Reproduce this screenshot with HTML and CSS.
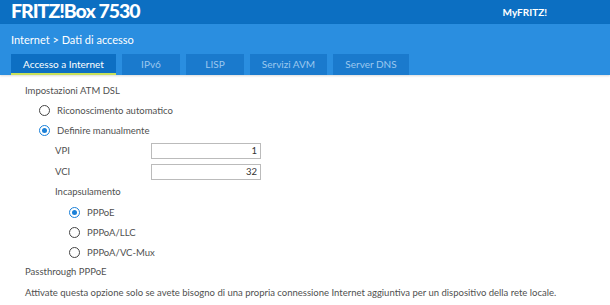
FILE: index.html
```html
<!DOCTYPE html>
<html>
<head>
<meta charset="utf-8">
<link rel="stylesheet" href="styles.css">
</head>
<body>
<header class="top">
  <div class="brand">FRITZ!Box 7530</div>
  <div class="myfritz">MyFRITZ!</div>
</header>
<div class="sub">
  <div class="crumb">Internet &gt; Dati di accesso</div>
  <nav class="tabs">
    <div class="tab active">Accesso a Internet</div>
    <div class="tab t-ipv6">IPv6</div>
    <div class="tab t-lisp">LISP</div>
    <div class="tab t-avm">Servizi AVM</div>
    <div class="tab t-dns">Server DNS</div>
  </nav>
</div>
<main class="content">
  <div class="heading">Impostazioni ATM DSL</div>
  <div class="group">
    <label class="radio"><span class="dot"></span>Riconoscimento automatico</label>
    <label class="radio"><span class="dot on"></span>Definire manualmente</label>
    <div class="sub-group">
      <div class="field"><span class="flabel">VPI</span><span class="input">1</span></div>
      <div class="field"><span class="flabel">VCI</span><span class="input">32</span></div>
      <div class="heading2">Incapsulamento</div>
      <div class="group2">
        <label class="radio"><span class="dot on"></span>PPPoE</label>
        <label class="radio"><span class="dot"></span>PPPoA/LLC</label>
        <label class="radio"><span class="dot"></span>PPPoA/VC-Mux</label>
      </div>
    </div>
  </div>
  <div class="heading pass">Passthrough PPPoE</div>
  <div class="desc">Attivate questa opzione solo se avete bisogno di una propria connessione Internet aggiuntiva per un dispositivo della rete locale.</div>
</main>
</body>
</html>
```

FILE: styles.css
```css
* { box-sizing: border-box; }
html, body { margin: 0; padding: 0; }
body {
  width: 610px;
  height: 305px;
  overflow: hidden;
  background: #fff;
  font-family: "Lato", "Open Sans", sans-serif;
  color: #505050;
}
.top {
  height: 24px;
  background: #0c6fc2;
  display: flex;
  align-items: flex-start;
  justify-content: space-between;
  padding: 0 63px 0 11px;
}
.brand {
  color: #fff;
  font-family: "Lato", sans-serif;
  font-weight: 900;
  font-size: 19.5px;
  line-height: 22px;
  letter-spacing: -1px;
}
.myfritz {
  color: #fff;
  font-size: 10px;
  font-weight: 700;
  line-height: 24px;
}
.sub {
  background: #2a8ee0;
  height: 51px;
  padding: 0 0 0 11px;
  box-shadow: 0 1px 2px rgba(0,0,0,0.15);
}
.crumb {
  color: #fff;
  font-size: 11px;
  height: 30px;
  line-height: 32px;
}
.tabs {
  display: flex;
  gap: 6px;
  height: 21px;
}
.tab {
  background: #1a7acd;
  color: #9cc8ef;
  font-size: 10px;
  height: 21px;
  line-height: 20px;
  text-align: center;
}
.tab.active {
  width: 105px;
  color: #fff;
  background: #0d6fc3;
  border-bottom: 2px solid #c8e05a;
}
.t-ipv6 { width: 58px; }
.t-lisp { width: 58px; }
.t-avm { width: 77px; }
.t-dns { width: 76px; }
.content {
  padding: 9px 0 0 25px;
  font-size: 9.5px;
}
.heading { height: 17px; line-height: 14px; }
.group { padding-left: 14px; margin-top: -1px; }
.radio {
  display: flex;
  align-items: center;
  height: 20px;
  gap: 7px;
}
.dot {
  width: 11px;
  height: 11px;
  border-radius: 50%;
  border: 1.5px solid #444;
  flex: none;
  display: inline-flex;
  align-items: center;
  justify-content: center;
}
.dot.on {
  border-color: #1a80d8;
  background: #fff;
}
.dot.on::after {
  content: "";
  width: 5px;
  height: 5px;
  border-radius: 50%;
  background: #1a80d8;
}
.sub-group { padding-left: 16px; }
.field {
  display: flex;
  align-items: center;
  height: 21px;
}
.flabel { width: 96px; }
.input {
  width: 110px;
  height: 16px;
  border: 1px solid #bbb;
  text-align: right;
  padding-right: 3px;
  line-height: 14px;
  color: #333;
}
.heading2 { height: 20px; line-height: 20px; }
.group2 { padding-left: 14px; }
.pass { line-height: 20px; height: 21px; }
.desc { line-height: 20px; white-space: nowrap; }
```
